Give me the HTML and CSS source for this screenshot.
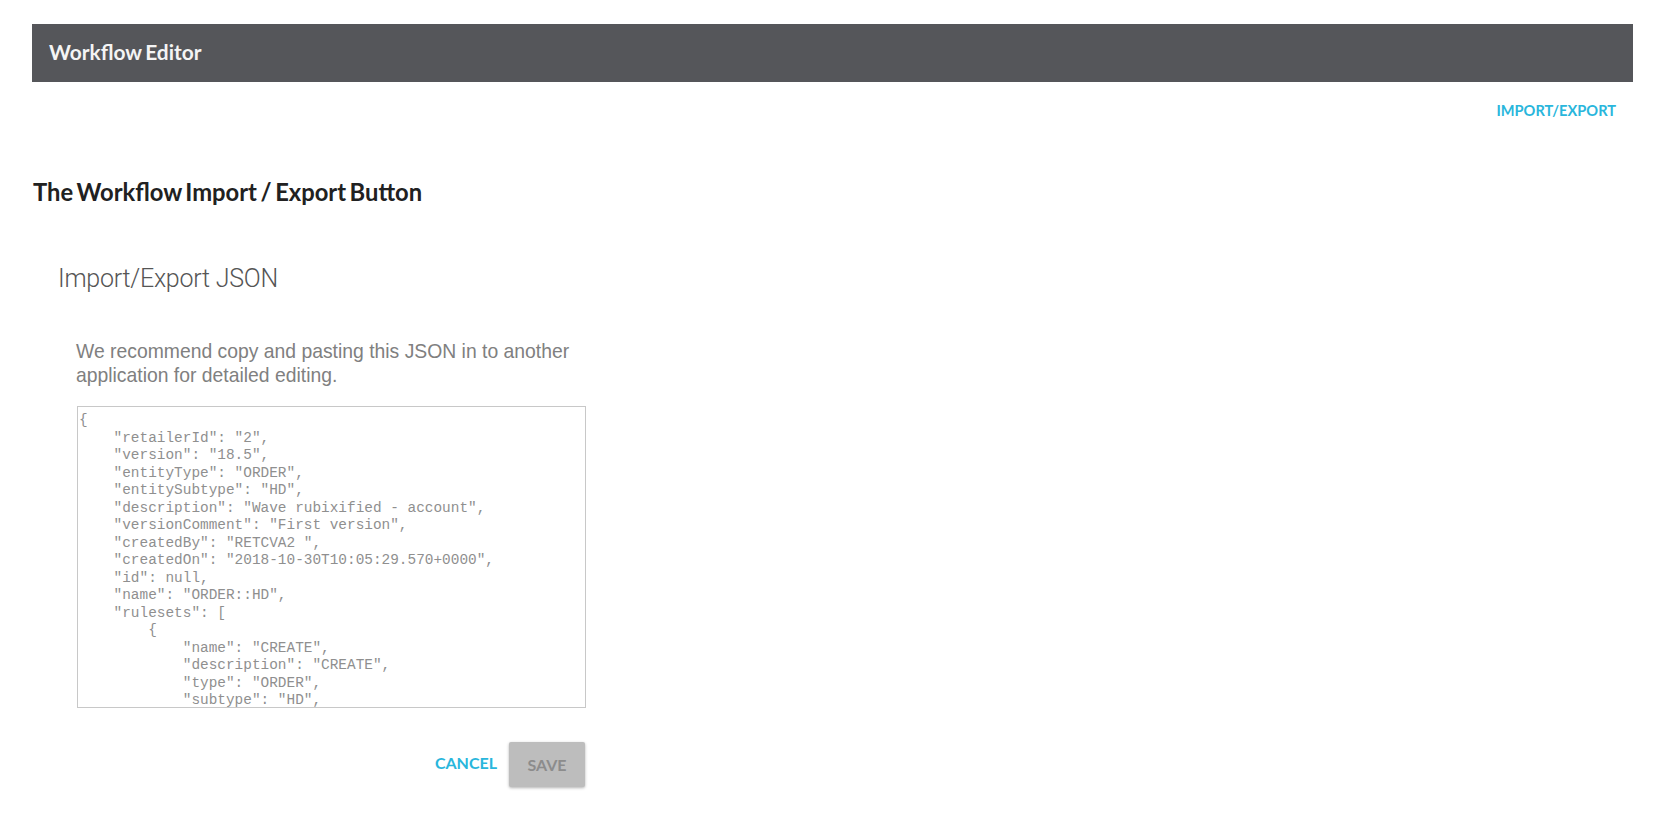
FILE: index.html
```html
<!DOCTYPE html>
<html lang="en">
<head>
<meta charset="utf-8">
<title>Workflow Editor</title>
<link rel="stylesheet" href="styles.css">
</head>
<body>
<header class="bar"><span class="bar-title">Workflow Editor</span></header>
<div class="actions"><a class="link-action">IMPORT/EXPORT</a></div>
<h2 class="section-title">The Workflow Import / Export Button</h2>
<section class="dialog">
  <h3 class="dialog-title">Import/Export JSON</h3>
  <div class="dialog-body">
    <p class="hint">We recommend copy and pasting this JSON in to another application for detailed editing.</p>
    <pre class="json">{
    "retailerId": "2",
    "version": "18.5",
    "entityType": "ORDER",
    "entitySubtype": "HD",
    "description": "Wave rubixified - account",
    "versionComment": "First version",
    "createdBy": "RETCVA2 ",
    "createdOn": "2018-10-30T10:05:29.570+0000",
    "id": null,
    "name": "ORDER::HD",
    "rulesets": [
        {
            "name": "CREATE",
            "description": "CREATE",
            "type": "ORDER",
            "subtype": "HD",</pre>
    <div class="buttons">
      <a class="cancel">CANCEL</a>
      <span class="save">SAVE</span>
    </div>
  </div>
</section>
</body>
</html>
```
FILE: styles.css
```css
html, body { margin: 0; padding: 0; background: #fff; }
body {
  width: 1662px;
  height: 839px;
  overflow: hidden;
  padding: 24px 29px 0 32px;
  box-sizing: border-box;
  font-family: Lato, "Liberation Sans", sans-serif;
}
.bar {
  height: 58px;
  background: #55565a;
  display: flex;
  align-items: center;
  padding: 0 0 4px 17px;
  box-sizing: border-box;
}
.bar-title { color: #f4f4f4; font-size: 20.9px; font-weight: 700; word-spacing: -1.5px; }
.actions {
  display: flex;
  justify-content: flex-end;
  padding: 20px 17px 0 0;
}
.link-action { color: #29b6dc; font-size: 14.6px; font-weight: 700; line-height: 18px; }
.section-title {
  margin: 57px 0 0 1px;
  font-size: 23.75px;
  font-weight: 700;
  line-height: 30px;
  color: #212121;
  word-spacing: -2.2px;
}
.dialog { width: 554px; padding-left: 26px; margin-top: 56px; box-sizing: border-box; }
.dialog-title {
  margin: 0;
  font-family: Roboto, sans-serif;
  font-weight: 300;
  font-size: 25px;
  line-height: 32px;
  color: #555;
  letter-spacing: -0.25px;
}
.dialog-body { padding-left: 18px; }
.hint {
  margin: 44px 0 0;
  font-family: "Liberation Sans", sans-serif;
  font-size: 19.35px;
  line-height: 24px;
  color: #808080;
  width: 505px;
}
.json {
  margin: 19px 0 0 1px;
  height: 302px;
  width: 509px;
  box-sizing: border-box;
  border: 1px solid #c8c8c8;
  overflow: hidden;
  padding: 5px 0 0 1px;
  font-family: "Liberation Mono", monospace;
  font-size: 14.42px;
  line-height: 17.5px;
  color: #8f8f8f;
}
.buttons {
  display: flex;
  justify-content: flex-end;
  align-items: center;
  gap: 12px;
  margin-top: 34px;
  width: 509px;
}
.cancel { color: #29b6dc; font-size: 16px; font-weight: 700; margin-bottom: 4px; }
.save {
  width: 76px;
  height: 45px;
  background: #bdbdbd;
  color: #8c8c8c;
  font-size: 16px;
  font-weight: 700;
  display: flex;
  align-items: center;
  justify-content: center;
  border-radius: 2px;
  box-shadow: 0 1px 3px rgba(0,0,0,.3);
}
```
